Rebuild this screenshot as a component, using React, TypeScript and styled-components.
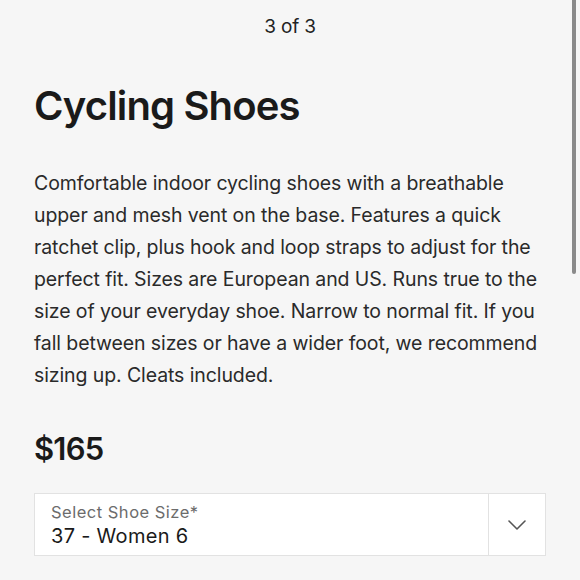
import React from "react";
import styled, { createGlobalStyle } from "styled-components";

const Global = createGlobalStyle`
  html, body { margin: 0; padding: 0; background: #f6f6f6; }
  body { font-family: Inter, "Noto Sans", sans-serif; color: #1b1b1b; }
`;

const Page = styled.div`
  position: relative;
  width: 580px;
  height: 580px;
  overflow: hidden;
  background: #f6f6f6;
  box-sizing: border-box;
  padding: 0 34px;
  display: flex;
  flex-direction: column;
`;

const Counter = styled.div`
  text-align: center;
  font-size: 19px;
  line-height: 24px;
  margin-top: 15px;
  color: #222;
  letter-spacing: -0.2px;
`;

const Title = styled.h1`
  margin: 43px 0 0;
  font-size: 40px;
  line-height: 48px;
  font-weight: 600;
  letter-spacing: -0.85px;
  color: #1a1a1a;
`;

const Description = styled.p`
  margin: 37px 0 0;
  font-size: 19.5px;
  line-height: 32px;
  color: #2a2a2a;
  letter-spacing: -0.1px;
`;

const Price = styled.div`
  margin-top: 38px;
  font-size: 31px;
  line-height: 40px;
  font-weight: 600;
  letter-spacing: -0.8px;
  color: #1a1a1a;
`;

const Select = styled.div`
  margin-top: 24px;
  width: 512px;
  height: 63px;
  box-sizing: border-box;
  background: #fff;
  border: 1px solid #e2e2e2;
  display: flex;
`;

const SelectBody = styled.div`
  flex: 1;
  padding: 8px 16px 0;
  display: flex;
  flex-direction: column;
`;

const SelectLabel = styled.div`
  font-size: 16.5px;
  line-height: 20px;
  color: #6c6c6c;
  letter-spacing: 0.5px;
`;

const SelectValue = styled.div`
  margin-top: 1px;
  font-size: 20px;
  line-height: 26px;
  color: #1a1a1a;
  letter-spacing: 0.3px;
`;

const SelectToggle = styled.div`
  width: 56px;
  border-left: 1px solid #e2e2e2;
  display: flex;
  align-items: center;
  justify-content: center;
`;

const Scrollbar = styled.div`
  position: absolute;
  right: 4px;
  top: 0;
  width: 4px;
  height: 274px;
  border-radius: 0 0 2px 2px;
  background: #8a8a8a;
`;

export default function App() {
  return (
    <>
      <Global />
      <Page>
        <Counter>3 of 3</Counter>
        <Title>Cycling Shoes</Title>
        <Description>
          Comfortable indoor cycling shoes with a breathable upper and mesh vent on the base. Features a quick ratchet clip, plus hook and loop straps to adjust for the perfect fit. Sizes are European and US. Runs true to the size of your everyday shoe. Narrow to normal fit. If you fall between sizes or have a wider foot, we recommend sizing up. Cleats included.
        </Description>
        <Price>$165</Price>
        <Select>
          <SelectBody>
            <SelectLabel>Select Shoe Size*</SelectLabel>
            <SelectValue>37 - Women 6</SelectValue>
          </SelectBody>
          <SelectToggle>
            <svg width="18" height="10" viewBox="0 0 18 10" fill="none">
              <path d="M1 1l8 8 8-8" stroke="#555" strokeWidth="1.6" strokeLinecap="round" strokeLinejoin="round" />
            </svg>
          </SelectToggle>
        </Select>
        <Scrollbar />
      </Page>
    </>
  );
}
